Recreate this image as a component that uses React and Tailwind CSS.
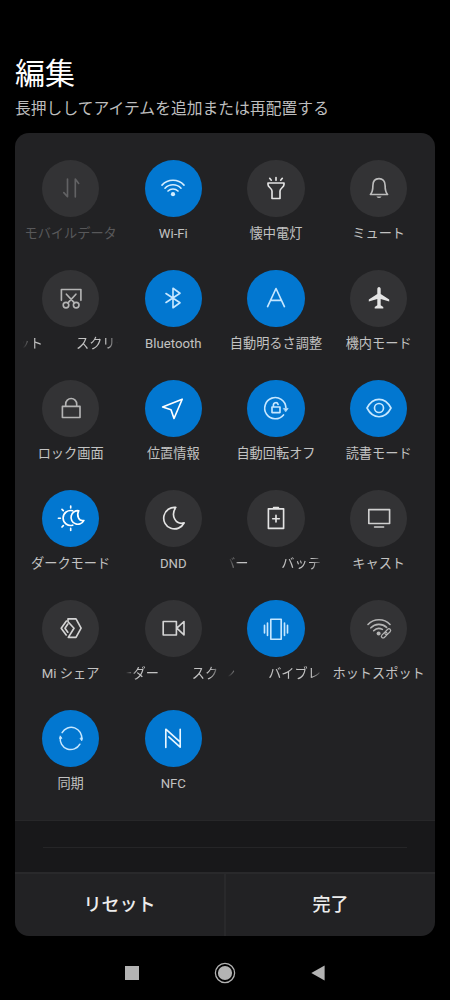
import React from 'react';
import clsx from 'clsx';

// Every glyph is drawn around the centre of its tile
const Glyph = ({ children, width = 1.65 }) => (
  <svg
    viewBox="-15 -15 30 30"
    className="w-[30px] h-[30px]"
    fill="none"
    stroke="currentColor"
    strokeWidth={width}
    strokeLinecap="round"
    strokeLinejoin="round"
  >
    {children}
  </svg>
);

const icons = {
  data: (
    <Glyph>
      <path d="M-3.5-9V8.7L-7.2 4.6M4.3 9V-9L7.7-4.6" />
    </Glyph>
  ),
  wifi: (
    <Glyph>
      <path d="M-11-2.9A15 15 0 0 1 11-2.9M-8 .2A11 11 0 0 1 8 .2M-5 3A7.2 7.2 0 0 1 5 3" />
      <circle cx="0" cy="6.2" r="2.1" fill="currentColor" stroke="none" />
    </Glyph>
  ),
  torch: (
    <Glyph>
      <path d="M-8-5H8V-3.5C8-.5 4 0 4 3V10.5H-4V3C-4 0-8-.5-8-3.5ZM0-10.5V-7.7M-6.3-9.7L-4.7-7.8M6.3-9.7L4.7-7.8" />
    </Glyph>
  ),
  bell: (
    <Glyph>
      <path d="M-8.6 6.5C-6.6 4.3-6.1 3-6.1-2.5C-6.1-7-3.5-9.4 0-9.4S6.1-7 6.1-2.5C6.1 3 6.6 4.3 8.6 6.5Z" />
      <path d="M-2.6 8.5H2.6Q1.6 10 0 10T-2.6 8.5Z" fill="currentColor" stroke="none" />
    </Glyph>
  ),
  screenshot: (
    <Glyph>
      <path d="M-9.6 2.3V-8.5H9.9V2.3M-4.6-3.8L3.4 4.9M4.9-3.8L-3.1 4.9" />
      <circle cx="-5" cy="7.1" r="2.8" />
      <circle cx="5.2" cy="7.1" r="2.8" />
    </Glyph>
  ),
  bluetooth: (
    <Glyph>
      <path d="M-7-4.5L7 4.8L0 9.7V-9.7L7-4.8L-7 4.5" />
    </Glyph>
  ),
  auto: (
    <Glyph>
      <path d="M-8.4 8.6L0-9.5L8.4 8.6M-5.6 2.4H5.6" />
    </Glyph>
  ),
  airplane: (
    <Glyph>
      <path
        d="M0-11C1.1-11 1.7-10 1.7-8.8V-4L10.2 1.5V3.4L1.7.9V7.2L4.3 9V10.5H-4.3V9L-1.7 7.2V.9L-10.2 3.4V1.5L-1.7-4V-8.8C-1.7-10-1.1-11 0-11Z"
        fill="currentColor"
        stroke="none"
      />
    </Glyph>
  ),
  lock: (
    <Glyph>
      <path d="M-8.6-1.6H9V9.5H-8.6ZM-5.3-1.6V-4A5.5 5.5 0 0 1 5.7-4V-1.6" />
    </Glyph>
  ),
  location: (
    <Glyph>
      <path d="M9.2-8.8L-10.4-1L-2 1.8L1 10.5Z" />
    </Glyph>
  ),
  rotate: (
    <Glyph>
      <path d="M9.9-.5A10.6 10.6 0 1 0 7.5 6.9" />
      <path d="M-4-1H4V4.6H-4ZM-2.6-1V-2.9A2.4 2.4 0 0 1 2.1-3.6" />
      <path d="M7.6 .4H12.2L9.9 3.6Z" fill="currentColor" strokeWidth=".6" />
    </Glyph>
  ),
  eye: (
    <Glyph>
      <path d="M-12 0C-9-5.8-4.8-8.7 0-8.7S9-5.8 12 0C9 5.8 4.8 8.7 0 8.7S-9 5.8-12 0Z" />
      <circle cx="0" cy="0" r="4.5" />
    </Glyph>
  ),
  dark: (
    <Glyph>
      <path d="M1.7-7.2A7.5 7.5 0 1 0 1.7 7.2" />
      <path d="M7.8-7.3A6.8 6.8 0 1 0 12.9 2.5C8 3.7 5-2.3 7.8-7.3Z" />
      <path d="M-.3-12V-10M-.3 10.4V12.4M-12.6 .2H-10.6M-9-8.7L-7.7-7.4M-9 9L-7.7 7.7" />
    </Glyph>
  ),
  moon: (
    <Glyph>
      <path d="M2.8-10.6A10.8 10.8 0 1 0 11.2 4.9C2.9 7.2-2.8-2.3 2.8-10.6Z" />
    </Glyph>
  ),
  battery: (
    <Glyph>
      <path d="M-7.6-9.2H7.6V10.4H-7.6ZM0-2.6V4M-3.3 .7H3.3" />
      <path d="M-2.4-10.4H2.4" />
    </Glyph>
  ),
  cast: (
    <Glyph>
      <path d="M-10.2-8.4H10.6V5.5H-10.2ZM-4.4 9H4.6" />
    </Glyph>
  ),
  share: (
    <Glyph>
      <path d="M-3-9.2H5L10.1.2L5 9.4H-2.7L3 .2L-3-6.2Z" />
      <path d="M-4.6-7L-9.8.2L-4.8 7M-3.2-4L-6 .2L-3.2 4.2" />
    </Glyph>
  ),
  video: (
    <Glyph>
      <path d="M-9.8-6.5H3.4V7H-9.8ZM11-6.5V6.9L3.8.2Z" />
    </Glyph>
  ),
  vibrate: (
    <Glyph>
      <path d="M-5.2-8.8H5.2V11.2H-5.2ZM-8.5-5V7.4M8.5-5V7.4M-11.5-2.6V5M11.5-2.6V5" />
    </Glyph>
  ),
  hotspot: (
    <Glyph>
      <path d="M-11-3.5A15.2 15.2 0 0 1 11-3.5M-8.1-.2A11 11 0 0 1 7.6-.6M-5.3 2.7A7.2 7.2 0 0 1 3.4 1.4" />
      <circle cx="-.4" cy="5.4" r="2" fill="currentColor" stroke="none" />
      <g transform="rotate(-45 7 5.4)" strokeWidth="1.2">
        <rect x="1.2" y="3.7" width="6.8" height="3.4" rx="1.7" />
        <rect x="6" y="3.7" width="6.8" height="3.4" rx="1.7" />
      </g>
    </Glyph>
  ),
  sync: (
    <Glyph width={1.5}>
      <path d="M-8.9-5.4A10.5 10.5 0 0 1 10.6 1.4M8.9 6.2A10.5 10.5 0 0 1-10.6-.8" />
      <path d="M9.2 .6L10.8 2.8L11.4 .2ZM-9.2 0L-10.8-2.2L-11.4 .4Z" fill="currentColor" strokeWidth=".8" />
    </Glyph>
  ),
  nfc: (
    <Glyph>
      <path d="M-7.2 9.4V-8.8L7 3.8M7.2-8.8V9.2L-4.2-1.2" />
    </Glyph>
  ),
};

// head / tail: the two pieces of a marquee label that are in view
const tiles = [
  { icon: 'data', label: 'モバイルデータ', disabled: true },
  { icon: 'wifi', label: 'Wi-Fi', on: true, tone: 'text-[#d3edff]' },
  { icon: 'torch', label: '懐中電灯', tone: 'text-[#e4e4e4]' },
  { icon: 'bell', label: 'ミュート', tone: 'text-[#bcbcbc]' },
  { icon: 'screenshot', tail: 'ット', head: 'スクリー', tone: 'text-[#b4b4b4]' },
  { icon: 'bluetooth', label: 'Bluetooth', on: true, tone: 'text-[#c6e7ff]' },
  { icon: 'auto', label: '自動明るさ調整', on: true, tone: 'text-[#c6e7ff]' },
  { icon: 'airplane', label: '機内モード', tone: 'text-[#e4e4e4]' },
  { icon: 'lock', label: 'ロック画面', tone: 'text-[#b4b4b4]' },
  { icon: 'location', label: '位置情報', on: true, tone: 'text-white' },
  { icon: 'rotate', label: '自動回転オフ', on: true, tone: 'text-[#c6e7ff]' },
  { icon: 'eye', label: '読書モード', on: true, tone: 'text-[#c6e7ff]' },
  { icon: 'dark', label: 'ダークモード', on: true, tone: 'text-white' },
  { icon: 'moon', label: 'DND', tone: 'text-[#e4e4e4]' },
  { icon: 'battery', tail: 'バー', head: 'バッテ', tone: 'text-[#e4e4e4]' },
  { icon: 'cast', label: 'キャスト', tone: 'text-[#d0d0d0]' },
  { icon: 'share', label: 'Mi シェア', tone: 'text-[#d4d4d4]' },
  { icon: 'video', tail: 'ーダー', head: 'スク', tone: 'text-[#d4d4d4]' },
  { icon: 'vibrate', tail: 'ン', head: 'バイブレ', on: true, tone: 'text-[#c6e7ff]' },
  { icon: 'hotspot', label: 'ホットスポット', tone: 'text-[#b4b4b4]' },
  { icon: 'sync', label: '同期', on: true, tone: 'text-[#c6e7ff]' },
  { icon: 'nfc', label: 'NFC', on: true, tone: 'text-[#e8f6ff]' },
];

const TileLabel = ({ label, head, tail, disabled }) => {
  if (head) {
    return (
      <div className="w-[95px] overflow-hidden [mask-image:linear-gradient(to_right,transparent,black_11px,black_84px,transparent)]">
        <div className="flex w-max gap-[33px] -ml-[6.5px] whitespace-nowrap">
          <span>{tail}</span>
          <span>{head}</span>
        </div>
      </div>
    );
  }
  return <span className={clsx('whitespace-nowrap', disabled && 'text-[#58585a]')}>{label}</span>;
};

const Tile = ({ icon, on, tone, disabled, ...text }) => (
  <div className="flex flex-col items-center h-[110px]">
    <button
      className={clsx(
        'w-[57.5px] h-[57.5px] shrink-0 rounded-full flex items-center justify-center',
        on ? 'bg-[#0277d0]' : 'bg-[#333335]',
        disabled ? 'text-[#626264]' : tone
      )}
    >
      {icons[icon]}
    </button>
    <div className="mt-[7px] h-5 text-[13.2px] leading-5 text-[#c2c2c2]">
      <TileLabel disabled={disabled} {...text} />
    </div>
  </div>
);

const NavBar = () => (
  <nav className="flex items-center justify-center gap-[75px] h-16 pt-[10px] pr-[1px] text-[#b3b3b3]">
    <button className="w-[14px] h-[14px] bg-[#b3b3b3]" />
    <button>
      <svg viewBox="0 0 22 22" className="w-[22px] h-[22px]" fill="currentColor">
        <circle cx="11" cy="11" r="9.6" fill="none" stroke="currentColor" strokeWidth="1.3" />
        <circle cx="11" cy="11" r="7.1" />
      </svg>
    </button>
    <button>
      <svg viewBox="0 0 14 16" className="w-[14px] h-4" fill="currentColor">
        <path d="M.3 8L13.6 .4V15.6Z" />
      </svg>
    </button>
  </nav>
);

export default function App() {
  return (
    <div className="w-[450px] h-[1000px] overflow-hidden flex flex-col bg-black font-[Roboto,'Noto_Sans_CJK_JP',sans-serif]">
      <header className="h-[133px] shrink-0 px-[15px] pt-[54px]">
        <h1 className="text-[30px] leading-10 text-white">編集</h1>
        <p className="mt-[3px] text-[15.75px] tracking-[0.05px] leading-6 text-[#bdbdbd] whitespace-nowrap">
          長押ししてアイテムを追加または再配置する
        </p>
      </header>

      <main className="mx-[15px] h-[803px] shrink-0 flex flex-col rounded-[14px] overflow-hidden bg-[#222224]">
        <div className="h-[688px] grid grid-cols-4 content-start pt-[26.5px] pl-[4.3px] pr-[5px] border-b border-[#272729]">
          {tiles.map((tile) => (
            <Tile key={tile.icon} {...tile} />
          ))}
        </div>
        <div className="h-[51px] px-7 pt-[26px] bg-[#18181a]">
          <div className="h-px bg-[#252527]" />
        </div>
        <div className="flex-1 flex border-t-2 border-[#29292b] text-[18px] font-medium text-[#ececec]">
          <button className="w-[211px] pb-[2px] border-r-2 border-[#29292b]">リセット</button>
          <button className="flex-1 pb-[2px]">完了</button>
        </div>
      </main>

      <NavBar />
    </div>
  );
}
